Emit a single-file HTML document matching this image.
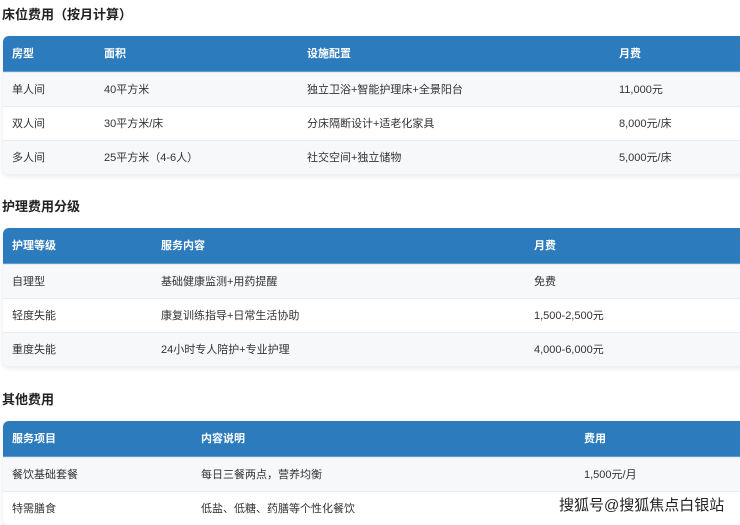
<!DOCTYPE html>
<html><head><meta charset="utf-8"><style>
body{margin:0;width:740px;height:523px;overflow:hidden;background:#fff;font-family:"Liberation Sans","Noto Sans CJK SC",sans-serif;color:#333;position:relative}
h3{position:absolute;left:2px;margin:0;font-size:13px;font-weight:bold;color:#222}
.t{position:absolute;left:3px;width:745px;border-radius:6px;overflow:hidden;box-shadow:0 2px 6px rgba(0,0,0,.1);background:#fff}
.r{position:relative;height:34px;font-size:11px;line-height:34px;border-top:1px solid #e8ecf0;box-sizing:border-box}
.r span{position:absolute;top:0}
.h{height:36px;line-height:36px;background:#2b7bbd;color:#fff;font-weight:bold;border:none;border-bottom:1px solid #5a9bd0}
.o{background:#f6f8fa}
.wm{position:absolute;left:559px;top:494px;font-size:15px;color:#222;text-shadow:0 0 2px #fff,0 0 1px #fff,1px 1px 0 #fff,-1px -1px 0 #fff}
</style></head><body>
<h3 style="top:4px">床位费用（按月计算）</h3>
<div class="t" style="top:36px">
<div class="r h"><span style="left:9px">房型</span><span style="left:101px">面积</span><span style="left:304px">设施配置</span><span style="left:616px">月费</span></div>
<div class="r o"><span style="left:9px">单人间</span><span style="left:101px">40平方米</span><span style="left:304px">独立卫浴+智能护理床+全景阳台</span><span style="left:616px">11,000元</span></div>
<div class="r"><span style="left:9px">双人间</span><span style="left:101px">30平方米/床</span><span style="left:304px">分床隔断设计+适老化家具</span><span style="left:616px">8,000元/床</span></div>
<div class="r o"><span style="left:9px">多人间</span><span style="left:101px">25平方米（4-6人）</span><span style="left:304px">社交空间+独立储物</span><span style="left:616px">5,000元/床</span></div>
</div>
<h3 style="top:196px">护理费用分级</h3>
<div class="t" style="top:228px">
<div class="r h"><span style="left:9px">护理等级</span><span style="left:158px">服务内容</span><span style="left:531px">月费</span></div>
<div class="r o"><span style="left:9px">自理型</span><span style="left:158px">基础健康监测+用药提醒</span><span style="left:531px">免费</span></div>
<div class="r"><span style="left:9px">轻度失能</span><span style="left:158px">康复训练指导+日常生活协助</span><span style="left:531px">1,500-2,500元</span></div>
<div class="r o"><span style="left:9px">重度失能</span><span style="left:158px">24小时专人陪护+专业护理</span><span style="left:531px">4,000-6,000元</span></div>
</div>
<h3 style="top:389px">其他费用</h3>
<div class="t" style="top:421px">
<div class="r h"><span style="left:9px">服务项目</span><span style="left:198px">内容说明</span><span style="left:581px">费用</span></div>
<div class="r o"><span style="left:9px">餐饮基础套餐</span><span style="left:198px">每日三餐两点，营养均衡</span><span style="left:581px">1,500元/月</span></div>
<div class="r"><span style="left:9px">特需膳食</span><span style="left:198px">低盐、低糖、药膳等个性化餐饮</span></div>
</div>
<div class="wm">搜狐号@搜狐焦点白银站</div>
</body></html>
